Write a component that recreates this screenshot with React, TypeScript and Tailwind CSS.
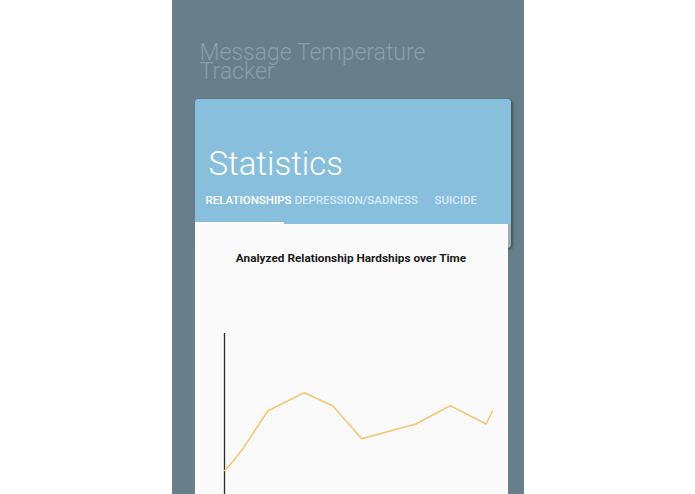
import React from "react";

export default function App() {
  const pts: [number, number][] = [
    [29.3, 205],
    [39, 194],
    [49.3, 180.7],
    [72.7, 145],
    [109.3, 126.7],
    [137.7, 139.7],
    [166.7, 172.7],
    [221, 158],
    [255.3, 139.7],
    [291, 158],
    [297.7, 144.7],
  ];
  return (
    <div
      className="w-full min-h-screen bg-white flex justify-center"
      style={{ fontFamily: "Roboto, 'Noto Sans', sans-serif" }}
    >
      <div className="w-[352px] h-[494px] bg-[#687f8b] overflow-hidden flex flex-col">
        <h1 className="shrink-0 pt-[43px] pl-[28px] text-[23px] leading-[19px] font-light text-[#8c9da6]">
          Message Temperature
          <br />
          Tracker
        </h1>
        <div className="shrink-0 ml-[23px] mt-[18px] w-[316px] rounded-[4px] bg-[#a3acb0] shadow-[2px_1px_3px_rgba(0,0,0,0.35)] overflow-hidden">
          <div className="bg-[#88bfdc] pt-[46px] flex flex-col">
            <div className="pl-[14px] text-[33px] leading-[38px] font-light text-white">
              Statistics
            </div>
            <div className="mt-[9px] flex text-[11.5px] leading-[16px] font-medium whitespace-nowrap">
              <span className="ml-[11px] w-[89px] text-white">RELATIONSHIPS</span>
              <span className="w-[140px] text-[#d6e9f3]">DEPRESSION/SADNESS</span>
              <span className="text-[#d6e9f3]">SUICIDE</span>
            </div>
            <div className="mt-[14px] h-[2px] w-[89px] bg-white" />
          </div>
          <div className="h-[24px]" />
        </div>
        <div className="relative mt-[-24px] ml-[23px] w-[313px] flex-1 bg-[#fafafa] flex flex-col">
          <div className="pt-[26px] text-center text-[11.8px] leading-[16px] font-bold text-[#1a1a1a]">
            Analyzed Relationship Hardships over Time
          </div>
          <svg width="313" height="240" className="block shrink-0">
            <line x1="29.5" y1="67" x2="29.5" y2="240" stroke="#2b2b2b" strokeWidth="1.3" />
            <polyline
              points={pts.map((p) => p.join(",")).join(" ")}
              fill="none"
              stroke="#f6c46e"
              strokeWidth="1.5"
              strokeLinejoin="round"
            />
          </svg>
        </div>
      </div>
    </div>
  );
}
